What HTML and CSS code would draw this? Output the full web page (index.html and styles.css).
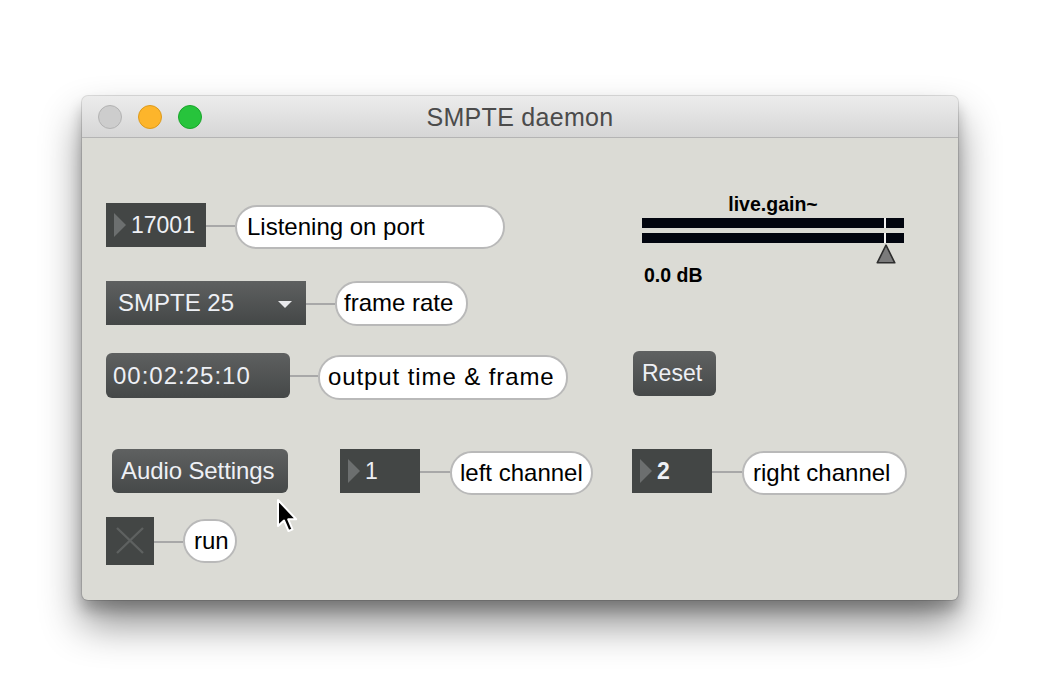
FILE: index.html
```html
<!DOCTYPE html>
<html>
<head>
<meta charset="utf-8">
<link rel="stylesheet" href="styles.css">
</head>
<body>
<div class="window">
  <div class="titlebar">
    <div class="lights">
      <span class="light close"></span>
      <span class="light min"></span>
      <span class="light max"></span>
    </div>
    <div class="title">SMPTE daemon</div>
  </div>
  <div class="canvas">
    <div class="top">
      <div class="left">
        <div class="row r1">
          <div class="numbox w100"><span class="tri"></span><span class="val">17001</span></div>
          <span class="wire w29"></span>
          <div class="bubble b-listen">Listening on port</div>
        </div>
        <div class="row r2">
          <div class="menu"><span class="menu-label">SMPTE 25</span><span class="arrow"></span></div>
          <span class="wire w29"></span>
          <div class="bubble b-frame">frame rate</div>
        </div>
        <div class="row r3">
          <div class="clock">00:02:25:10</div>
          <span class="wire w28"></span>
          <div class="bubble b-output">output time &amp; frame</div>
        </div>
      </div>
      <div class="right">
        <div class="gain">
          <div class="gain-label">live.gain~</div>
          <div class="bar"><span class="mark"></span></div>
          <div class="bar second"><span class="mark"></span></div>
          <div class="slider-row">
            <svg class="thumb" width="20" height="20" viewBox="0 0 20 20"><polygon points="10,1.2 18.8,18.8 1.2,18.8" fill="#7b7b7b" stroke="#2e2e2e" stroke-width="1.6" stroke-linejoin="round"/></svg>
          </div>
          <div class="gain-db">0.0 dB</div>
        </div>
        <div class="btn reset">Reset</div>
      </div>
    </div>
    <div class="row r4">
      <div class="btn audio">Audio Settings</div>
      <div class="numbox w80 nb1"><span class="tri"></span><span class="val">1</span></div>
      <span class="wire w30"></span>
      <div class="bubble b-left">left channel</div>
      <div class="numbox w80 nb2"><span class="tri"></span><span class="val bold">2</span></div>
      <span class="wire w30"></span>
      <div class="bubble b-right">right channel</div>
    </div>
    <div class="row r5">
      <div class="toggle">
        <svg width="48" height="48" viewBox="0 0 48 48"><path d="M11 11 L37 36 M37 11 L11 36" stroke="#5e6160" stroke-width="2.4" fill="none"/></svg>
      </div>
      <span class="wire w29 tw"></span>
      <div class="bubble b-run">run</div>
    </div>
  </div>
</div>
<svg class="cursor" width="24" height="38" viewBox="0 0 24 38"><path d="M2 2 L2 28 L8 22.5 L12.5 33 L16.5 31.3 L12.2 21.3 L20.2 21.3 Z" fill="#000" stroke="#fff" stroke-width="2" stroke-linejoin="round"/></svg>
</body>
</html>
```

FILE: styles.css
```css
html, body {
  margin: 0;
  padding: 0;
  background: #ffffff;
}
body {
  width: 1042px;
  height: 693px;
  overflow: hidden;
  position: relative;
  font-family: "Liberation Sans", Arial, sans-serif;
}
.window {
  margin: 96px 0 0 82px;
  width: 876px;
  height: 504px;
  border-radius: 6px;
  background: #dbdbd5;
  box-shadow: 0 0 0 1px rgba(0,0,0,0.12), 0 24px 40px rgba(0,0,0,0.45), 0 10px 14px rgba(0,0,0,0.22);
  overflow: hidden;
}
.titlebar {
  height: 41px;
  border-bottom: 1px solid #b4b4b4;
  background: linear-gradient(#ececec, #d6d6d6);
  display: flex;
  align-items: center;
  position: relative;
}
.lights {
  display: flex;
  gap: 16px;
  margin-left: 16px;
  margin-top: 1px;
}
.light {
  width: 24px;
  height: 24px;
  border-radius: 50%;
  box-sizing: border-box;
}
.close { background: #cdcdcd; border: 1px solid #b3b3b3; }
.min { background: #fdb52b; border: 1px solid #dd9a1c; }
.max { background: #27c43c; border: 1px solid #1aa52b; }
.title {
  position: absolute;
  left: 0;
  right: 0;
  top: 0;
  line-height: 42px;
  text-align: center;
  font-size: 25px;
  color: #4b4b4b;
  letter-spacing: 0.3px;
}
.canvas {
  padding: 55px 0 0 24px;
}
.top {
  display: flex;
  align-items: flex-start;
}
.left {
  width: 527px;
  padding-top: 10px;
}
.row {
  display: flex;
  align-items: flex-start;
}
.r2 { margin-top: 32px; }
.r3 { margin-top: 27px; }
.r4 { margin-top: 49px; }
.r5 { margin-top: 22px; }

.numbox {
  height: 44px;
  background: #434645;
  display: flex;
  align-items: center;
  color: #eef0f5;
  font-size: 23px;
}
.w100 { width: 100px; }
.w80 { width: 80px; }
.tri {
  width: 0;
  height: 0;
  border-top: 12px solid transparent;
  border-bottom: 12px solid transparent;
  border-left: 12px solid #6c6f6f;
  margin-left: 8px;
  margin-right: 5px;
}
.val { line-height: 44px; }
.val.bold { font-weight: bold; }
.nb1 { margin-left: 52px; }
.nb2 { margin-left: 39px; }

.wire {
  height: 2px;
  background: #a8a8a8;
  margin-top: 22px;
}
.w28 { width: 28px; }
.w29 { width: 29px; }
.w30 { width: 30px; }
.tw { margin-top: 24px; }

.bubble {
  box-sizing: border-box;
  height: 44px;
  margin-top: 2px;
  background: #ffffff;
  border: 2px solid #b9b9b9;
  border-radius: 22px;
  font-size: 24px;
  line-height: 40px;
  color: #000;
  padding-left: 10px;
  white-space: nowrap;
}
.b-listen { width: 270px; padding-left: 10px; }
.b-frame { width: 133px; height: 45px; margin-top: 0; padding-left: 7px; }
.b-output { width: 250px; height: 45px; padding-left: 8px; letter-spacing: 0.9px; }
.b-left { width: 143px; padding-left: 8px; }
.b-right { width: 165px; padding-left: 9px; }
.b-run { width: 54px; padding-left: 9px; }

.menu {
  width: 200px;
  height: 44px;
  background: linear-gradient(#5e6060, #444747);
  display: flex;
  align-items: center;
  color: #eef0f5;
  font-size: 24px;
}
.menu-label { margin-left: 12px; }
.arrow {
  margin-left: auto;
  margin-right: 14px;
  width: 0;
  height: 0;
  border-left: 7px solid transparent;
  border-right: 7px solid transparent;
  border-top: 7px solid #e8e9ec;
  margin-top: 2px;
}
.clock {
  width: 184px;
  height: 45px;
  border-radius: 6px;
  background: linear-gradient(#5e6060, #454848);
  color: #eef0f5;
  font-size: 24px;
  line-height: 45px;
  padding-left: 7px;
  box-sizing: border-box;
  letter-spacing: 1px;
}

.right {
  display: flex;
  flex-direction: column;
  align-items: flex-start;
}
.gain {
  margin-left: 9px;
  width: 262px;
}
.gain-label {
  text-align: center;
  font-weight: bold;
  font-size: 19.5px;
  line-height: 22px;
  color: #000;
}
.bar {
  position: relative;
  height: 10px;
  background: #02050f;
  margin-top: 3px;
}
.bar.second { margin-top: 5px; }
.mark {
  position: absolute;
  left: 242px;
  top: 0;
  width: 2px;
  height: 10px;
  background: #f2f2f2;
}
.slider-row {
  height: 21px;
  position: relative;
}
.thumb {
  position: absolute;
  left: 234px;
  top: 1px;
}
.gain-db {
  margin-left: 2px;
  font-weight: bold;
  font-size: 19.5px;
  line-height: 22px;
  color: #000;
}
.btn {
  height: 45px;
  box-sizing: border-box;
  border-radius: 6px;
  background: linear-gradient(#5f6161, #464949);
  color: #eef0f5;
  font-size: 23px;
  line-height: 45px;
  padding-left: 9px;
}
.reset {
  width: 83px;
  margin-top: 65px;
}
.audio {
  width: 176px;
  height: 44px;
  line-height: 44px;
  margin-left: 6px;
  font-size: 24px;
  letter-spacing: -0.1px;
}
.toggle {
  width: 48px;
  height: 48px;
  background: #434645;
}
.toggle svg { display: block; }
.cursor {
  position: absolute;
  left: 276px;
  top: 498px;
}
```
